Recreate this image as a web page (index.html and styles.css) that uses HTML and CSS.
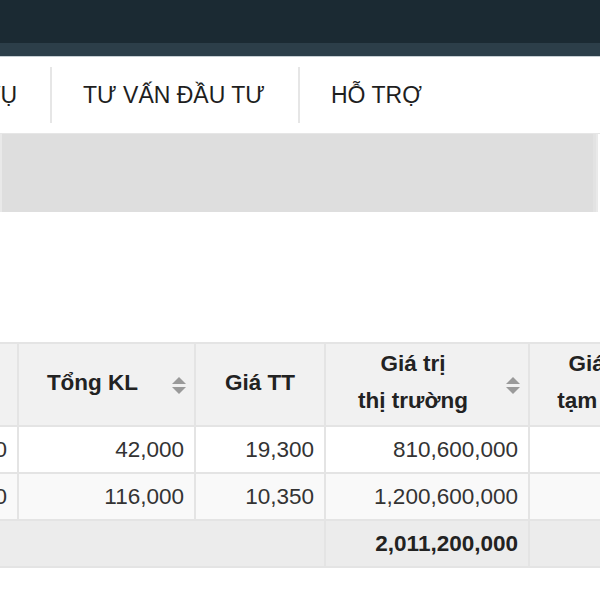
FILE: index.html
```html
<!DOCTYPE html>
<html lang="vi">
<head>
<meta charset="utf-8">
<link rel="stylesheet" href="styles.css">
</head>
<body>
<header class="topbar"></header>
<div class="substrip"></div>
<nav class="mainnav">
  <div class="nav-item first">DỊCH VỤ</div>
  <div class="nav-item">TƯ VẤN ĐẦU TƯ</div>
  <div class="nav-item">HỖ TRỢ</div>
</nav>
<div class="band"><div class="band-inner"></div></div>
<div class="spacer"></div>
<div class="table-wrap">
<table class="grid">
  <colgroup>
    <col class="c1"><col class="c2"><col class="c3"><col class="c4"><col class="c5">
  </colgroup>
  <thead>
    <tr>
      <th>SL</th>
      <th class="sortable">Tổng KL<span class="sort"><svg width="14" height="17" viewBox="0 0 14 17"><polygon points="7,0 14,7 0,7" fill="#9a9a9a"/><polygon points="0,10 14,10 7,17" fill="#9a9a9a"/></svg></span></th>
      <th>Giá TT</th>
      <th class="sortable">Giá trị<br>thị trường<span class="sort"><svg width="14" height="17" viewBox="0 0 14 17"><polygon points="7,0 14,7 0,7" fill="#9a9a9a"/><polygon points="0,10 14,10 7,17" fill="#9a9a9a"/></svg></span></th>
      <th class="sortable">Giá trị<br>tạm tính<span class="sort"><svg width="14" height="17" viewBox="0 0 14 17"><polygon points="7,0 14,7 0,7" fill="#9a9a9a"/><polygon points="0,10 14,10 7,17" fill="#9a9a9a"/></svg></span></th>
    </tr>
  </thead>
  <tbody>
    <tr class="odd">
      <td>40,000</td><td>42,000</td><td>19,300</td><td>810,600,000</td><td></td>
    </tr>
    <tr class="even">
      <td>110,000</td><td>116,000</td><td>10,350</td><td>1,200,600,000</td><td></td>
    </tr>
    <tr class="total">
      <td colspan="3"></td><td class="strong">2,011,200,000</td><td></td>
    </tr>
  </tbody>
</table>
</div>
</body>
</html>
```
FILE: styles.css
```css
html, body {
  margin: 0;
  padding: 0;
  background: #ffffff;
}
body {
  width: 600px;
  height: 600px;
  overflow: hidden;
  font-family: "Liberation Sans", Arial, sans-serif;
  color: #333333;
}
.topbar {
  height: 43px;
  background: #1b2a33;
}
.substrip {
  height: 13px;
  background: #2c3e49;
  border-bottom: 1px solid #c5ced3;
}
.mainnav {
  height: 76px;
  display: flex;
  align-items: center;
  background: #ffffff;
}
.nav-item {
  height: 56px;
  display: flex;
  align-items: center;
  padding: 0 33px 0 31px;
  border-left: 2px solid #e6e6e6;
  font-size: 23px;
  color: #1e1e1e;
  white-space: nowrap;
}
.nav-item.first {
  border-left: none;
  width: 50px;
  box-sizing: border-box;
  padding: 0 33px 0 0;
  justify-content: flex-end;
  overflow: hidden;
}
.band {
  height: 79px;
  display: flex;
  padding-right: 2px;
  border-top: 1px solid #e6e6e6;
  box-sizing: border-box;
}
.band-inner {
  flex: 1;
  background: #dedede;
  border-left: 2px solid #e9e9e9;
  border-right: 2px solid #e9e9e9;
  box-shadow: inset -3px 0 0 #e3e3e3;
}
.spacer {
  height: 130px;
}
.table-wrap {
  margin-left: -83px;
  width: 900px;
}
.grid {
  border-collapse: collapse;
  table-layout: fixed;
  width: 783px;
  font-size: 22.5px;
}
.c1 { width: 100px; }
.c2 { width: 177px; }
.c3 { width: 130px; }
.c4 { width: 204px; }
.c5 { width: 172px; }
.grid th,
.grid td {
  border: 2px solid #e4e4e4;
}
.grid th {
  position: relative;
  background: #f1f1f1;
  font-weight: bold;
  color: #222222;
  text-align: center;
  line-height: 37px;
  padding: 1px 8px 6px;
}
.grid th.sortable {
  padding-right: 36px;
}
.sort {
  position: absolute;
  right: 8px;
  top: 50%;
  margin-top: -8px;
  width: 14px;
  height: 17px;
  display: block;
}
.sort svg {
  display: block;
}
.grid td {
  text-align: right;
  line-height: 31px;
  padding: 7px 10px 7px 8px;
  white-space: nowrap;
}
.odd td { background: #ffffff; }
.even td { background: #f9f9f9; }
.total td { background: #ececec; }
.strong { font-weight: bold; color: #222222; }
```
